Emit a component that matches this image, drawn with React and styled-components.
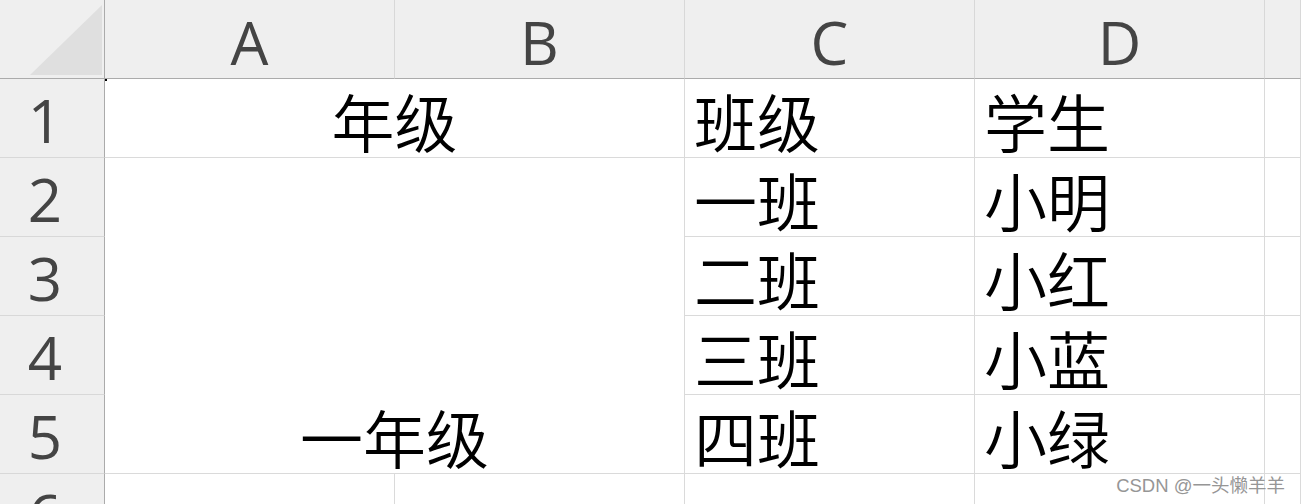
import React from "react";
import styled, { createGlobalStyle } from "styled-components";

const GlobalStyle = createGlobalStyle`
  html, body {
    margin: 0;
    padding: 0;
    background: #ffffff;
    overflow: hidden;
  }
`;

const Page = styled.div`
  position: relative;
  width: 1301px;
  height: 504px;
  overflow: hidden;
`;

const Sheet = styled.div`
  display: grid;
  grid-template-columns: 105px repeat(4, 290px) 1fr;
  grid-template-rows: 79px repeat(6, 79px);
`;

const Corner = styled.div`
  background: #efefef;
  border-right: 1px solid #ababab;
  border-bottom: 1px solid #ababab;
  display: flex;
  align-items: flex-end;
  justify-content: flex-end;
  padding: 0 2px 3px 0;
`;

const Triangle = styled.div`
  width: 72px;
  height: 70px;
  background: #dfdfdf;
  clip-path: polygon(100% 0, 100% 100%, 0 100%);
`;

const ColHeader = styled.div`
  background: #efefef;
  border-right: 1px solid #d8d8d8;
  border-bottom: 1px solid #ababab;
  display: flex;
  align-items: center;
  justify-content: center;
  padding-top: 6px;
  font-family: "Open Sans", "Noto Sans", sans-serif;
  font-size: 60px;
  line-height: 1;
  color: #444444;
`;

const RowHeader = styled.div`
  grid-column: 1;
  grid-row: ${p => p.$row};
  background: #efefef;
  border-right: 1px solid #ababab;
  border-bottom: 1px solid #d8d8d8;
  display: flex;
  align-items: center;
  justify-content: center;
  padding: 4px 14px 0 0;
  font-family: "Open Sans", "Noto Sans", sans-serif;
  font-size: 60px;
  line-height: 1;
  color: #444444;
`;

const Cell = styled.div`
  grid-column: ${p => p.$col} / span ${p => p.$colSpan || 1};
  grid-row: ${p => p.$row} / span ${p => p.$rowSpan || 1};
  border-right: 1px solid #dadada;
  border-bottom: 1px solid #dadada;
  display: flex;
  align-items: flex-end;
  justify-content: ${p => (p.$center ? "center" : "flex-start")};
  padding: 0 0 6px ${p => (p.$center ? "0" : "9px")};
  font-family: "Noto Sans CJK SC", "Noto Sans", sans-serif;
  font-size: 63px;
  font-weight: 350;
  line-height: 1;
  color: #000000;
  white-space: nowrap;
`;

const Marker = styled.div`
  position: absolute;
  left: 105px;
  top: 79px;
  width: 2px;
  height: 2px;
  background: #000000;
`;

const Watermark = styled.div`
  position: absolute;
  right: 16px;
  top: 474px;
  font-family: "Liberation Sans", "Noto Sans CJK SC", sans-serif;
  font-size: 18.5px;
  line-height: 24px;
  color: #969696;
  text-shadow: 0 0 1px #ffffff;
`;

const columns = ["A", "B", "C", "D", ""];

const cells = [
  { col: 2, row: 2, colSpan: 2, center: true, text: "年级" },
  { col: 4, row: 2, text: "班级" },
  { col: 5, row: 2, text: "学生" },
  { col: 6, row: 2, text: "" },
  { col: 2, row: 3, colSpan: 2, rowSpan: 4, center: true, text: "一年级" },
  { col: 4, row: 3, text: "一班" },
  { col: 5, row: 3, text: "小明" },
  { col: 6, row: 3, text: "" },
  { col: 4, row: 4, text: "二班" },
  { col: 5, row: 4, text: "小红" },
  { col: 6, row: 4, text: "" },
  { col: 4, row: 5, text: "三班" },
  { col: 5, row: 5, text: "小蓝" },
  { col: 6, row: 5, text: "" },
  { col: 4, row: 6, text: "四班" },
  { col: 5, row: 6, text: "小绿" },
  { col: 6, row: 6, text: "" },
  { col: 2, row: 7, text: "" },
  { col: 3, row: 7, text: "" },
  { col: 4, row: 7, text: "" },
  { col: 5, row: 7, text: "" },
  { col: 6, row: 7, text: "" },
];

export default function App() {
  return (
    <Page>
      <GlobalStyle />
      <Sheet>
        <Corner>
          <Triangle />
        </Corner>
        {columns.map((c, i) => (
          <ColHeader key={"h" + i}>{c}</ColHeader>
        ))}
        {[1, 2, 3, 4, 5, 6].map(n => (
          <RowHeader key={"r" + n} $row={n + 1}>
            {n}
          </RowHeader>
        ))}
        {cells.map((c, i) => (
          <Cell
            key={i}
            $col={c.col}
            $row={c.row}
            $colSpan={c.colSpan}
            $rowSpan={c.rowSpan}
            $center={c.center}
          >
            {c.text}
          </Cell>
        ))}
      </Sheet>
      <Marker />
      <Watermark>CSDN @一头懒羊羊</Watermark>
    </Page>
  );
}
